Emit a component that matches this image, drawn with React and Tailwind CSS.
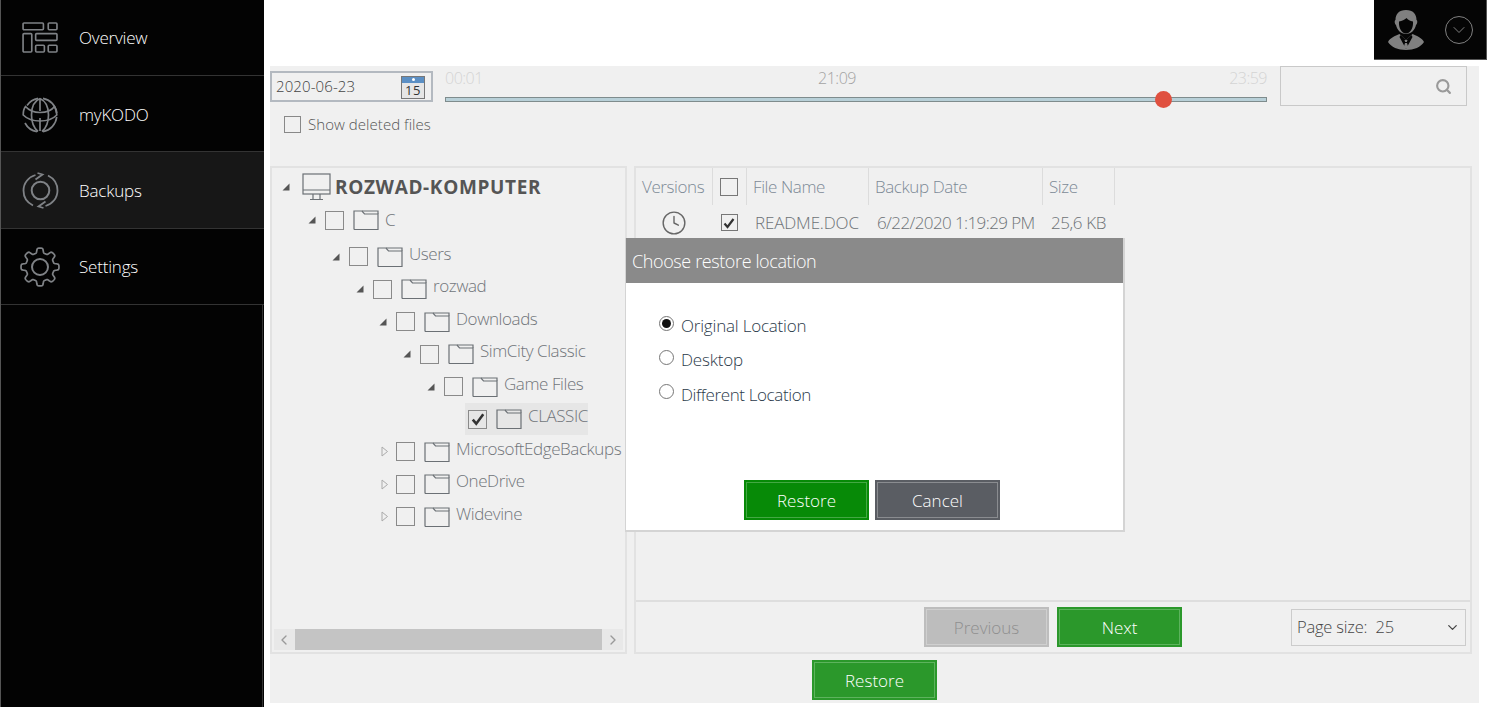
import React from "react";
import { ChevronDown, ChevronLeft, ChevronRight, Clock, Search } from "lucide-react";

const iconGrey = "#7f8286";

const OverviewIcon = () => (
  <svg width="37" height="31" viewBox="0 0 38 32" fill="none" stroke={iconGrey} strokeWidth="1.700">
    <rect x="1" y="1" width="21" height="7" rx="1" />
    <rect x="27" y="1" width="9" height="7" rx="1" />
    <rect x="1" y="12" width="9" height="19" rx="1" />
    <rect x="14" y="12" width="22" height="7" rx="1" />
    <rect x="14" y="24" width="9" height="7" rx="1" />
    <rect x="27" y="24" width="9" height="7" rx="1" />
  </svg>
);

const GlobeIcon = () => (
  <svg width="36" height="36" viewBox="0 0 36 36" fill="none" stroke={iconGrey} strokeWidth="1.700">
    <path d="M5 8.500A16.800 16.800 0 0 1 16 1.300M21 1.400A16.800 16.800 0 0 1 34.700 16M34.700 20A16.800 16.800 0 0 1 21 34.700M15 34.700A16.800 16.800 0 0 1 3 26" />
    <path d="M18 1.500C12 4 9.500 10 9.500 18c0 7 2.500 13 6.500 16.500M18 1.500c5.500 2.500 8.500 9 8.500 16.500 0 7-2.500 13-6.500 16.500M18 2v12M18 21v13" />
    <path d="M3.500 9.500C1.500 12 1.200 15 1.200 18c4 4 10 6 16.800 6s13-2 16.800-6c0-3-.5-6-2.300-8.500-3 4-8.500 6-14.500 6S7 13.500 3.500 9.500z" />
  </svg>
);

const BackupIcon = () => (
  <svg width="37" height="37" viewBox="0 0 37 37" fill="none" stroke={iconGrey} strokeWidth="1.800">
    <circle cx="18.500" cy="18.500" r="8.800" strokeWidth="2" />
    <path d="M11 33.500C5 30.500 1.500 25 1.500 18.500 1.500 11 6.500 5 13.500 3M26 3.500C32 6.500 35.500 12 35.500 18.500 35.500 26 30.500 32 23.500 34" />
    <path d="M13.500 7.500 20.500 2.500 15.500 1M23.500 29.500 16.500 34.500 21.500 36" />
  </svg>
);

// rounded eight-lobed cog outline
const gearPath = Array.from({ length: 192 }, (_, i) => {
  const a = (i / 192) * Math.PI * 2;
  const r = 16.6 + 2.4 * Math.tanh(2.6 * Math.cos(8 * a));
  return `${i ? "L" : "M"}${(20 + r * Math.cos(a)).toFixed(2)} ${(20 + r * Math.sin(a)).toFixed(2)}`;
}).join("") + "z";

const GearIcon = () => (
  <svg width="40" height="40" viewBox="0 0 40 40" fill="none" stroke={iconGrey} strokeWidth="1.700" strokeLinejoin="round">
    <circle cx="20" cy="20" r="8" strokeWidth="2" />
    <path d={gearPath} />
  </svg>
);

const UserIcon = () => (
  <svg width="36" height="40" viewBox="0 0 36 40" className="shrink-0">
    <path d="M18 0C11 0 7.500 4 7.500 10c-1.200.5-1 4 .5 5 1 5 5 9 10 9s9-4 10-9c1.500-1 1.700-4.500.5-5C28.500 4 25 0 18 0z" fill="#808080" />
    <path d="M11 11.500c3-.5 5.500-1.500 7.500-3.500 1.500 2 3.500 3 6.500 3.500.5 6-2.500 12-7 12s-7.500-6-7-12z" fill="#050505" />
    <path d="M0 32c2-4 7-6 11.500-8L18 30l6.500-6c4.500 2 9.500 4 11.500 8-3 5-10 8-18 8S3 37 0 32z" fill="#808080" />
    <path d="M12.500 25 18 30l5.500-5 1 2L18 39l-6.500-12z" fill="#050505" />
    <path d="M16.500 30h3l-.7 2h-1.600zM17 33h2l1.200 4-2.200 2-2.200-2z" fill="#808080" />
  </svg>
);

const FolderIcon = () => (
  <svg width="26" height="20" viewBox="0 0 26 20" fill="none" stroke="#6b7075" strokeWidth="1.200" className="shrink-0">
    <path d="M1 19V1h8l2.500 3H25v15.500H1.500z" />
    <path d="M9 1h16v3" />
  </svg>
);

const MonitorIcon = () => (
  <svg width="29" height="28" viewBox="0 0 29 28" fill="none" stroke="#6b7075" strokeWidth="1.200" className="shrink-0">
    <rect x="1" y="1" width="27" height="20" />
    <path d="M1 17h27M11 21v5M18 21v5M8 26.500h13" />
  </svg>
);

const Check = ({ size = 12 }) => (
  <svg width={size} height={size} viewBox="0 0 12 12" fill="none" stroke="#333" strokeWidth="2.200">
    <path d="M1.500 6.500 4.500 10 10.500 2" />
  </svg>
);

const Box = ({ checked }) => (
  <span className="flex items-center justify-center shrink-0 w-[19px] h-[19px] border border-[#8a8a8a]">
    {checked && <Check size={14} />}
  </span>
);

const sideItems = [
  { label: "Overview", icon: <OverviewIcon />, h: "h-[76px]" },
  { label: "myKODO", icon: <GlobeIcon />, h: "h-[76px] pt-[2px]" },
  { label: "Backups", icon: <BackupIcon />, h: "h-[77px] pt-[1px]", active: true },
  { label: "Settings", icon: <GearIcon />, h: "h-[76px]" },
];

const treeRows = [
  { label: "C", pad: "pl-[35px] mb-[3.75px]", open: true, textY: "-translate-y-[1px]" },
  { label: "Users", pad: "pl-[59px]", open: true },
  { label: "rozwad", pad: "pl-[83px]", open: true },
  { label: "Downloads", pad: "pl-[106px]", open: true },
  { label: "SimCity Classic", pad: "pl-[130px]", open: true },
  { label: "Game Files", pad: "pl-[154px]", open: true },
  { label: "CLASSIC", pad: "pl-[193px]", checked: true, leaf: true },
  { label: "MicrosoftEdgeBackups", pad: "pl-[106px]" },
  { label: "OneDrive", pad: "pl-[106px]" },
  { label: "Widevine", pad: "pl-[106px]" },
];

const Toggle = ({ open }) =>
  open ? (
    <svg width="8" height="8" viewBox="0 0 8 8" className="shrink-0">
      <path d="M7.500 .5v7H.5z" fill="#555" />
    </svg>
  ) : (
    <svg width="8" height="11" viewBox="0 0 8 11" className="shrink-0 translate-x-[2px]" fill="none" stroke="#aaa">
      <path d="M1 1l5.500 4.500L1 10z" />
    </svg>
  );

const TreeRow = ({ row }) => (
  <div className={`flex items-center h-[32.5px] ${row.pad}`}>
    {!row.leaf && (
      <span className="w-[10px] flex justify-center shrink-0">
        <Toggle open={row.open} />
      </span>
    )}
    <div className={`flex items-center h-[32px] ${row.leaf ? "bg-[#e6e6e6] pl-[3px]" : "pl-[8px]"}`}>
      <Box checked={row.checked} />
      <span className="ml-[9px]">
        <FolderIcon />
      </span>
      <span
        className={`ml-[6px] ${row.textY || "-translate-y-[3px]"} text-[17px] font-light text-[#70757a] tracking-[-0.42px] whitespace-nowrap`}
      >
        {row.label}
      </span>
    </div>
  </div>
);

const Btn = ({ children, className }) => (
  <button className={`w-[125px] h-[40px] border-2 text-[17px] font-light ${className}`}>
    <span className="block translate-y-[1px]">{children}</span>
  </button>
);

const Radio = ({ label, checked, h, track }) => (
  <label className={`flex items-center gap-[7px] ${h}`}>
    <span className="flex items-center justify-center w-[15px] h-[15px] rounded-full border border-[#767676] bg-white -translate-y-[3px]">
      {checked && <span className="w-[9px] h-[9px] rounded-full bg-[#111]" />}
    </span>
    <span className={`text-[17px] font-light text-[#2b3a4a] ${track}`}>{label}</span>
  </label>
);

const headCell =
  "flex items-center h-full pt-[1px] border-r border-[#dcdcdc] text-[17px] font-light text-[#7d8a96] tracking-[-0.4px] whitespace-nowrap";
const rowCell = "flex items-center pt-[1px] text-[17px] font-light text-[#6d7276] whitespace-nowrap";

export default function App() {
  return (
    <div
      className="relative flex w-full h-[707px] overflow-hidden bg-white"
      style={{ fontFamily: '"Open Sans", "Noto Sans", sans-serif' }}
    >
      <aside className="w-[264px] shrink-0 h-full bg-[#030303] border-l border-[#555] flex flex-col">
        {sideItems.map((item) => (
          <div
            key={item.label}
            className={`flex items-center border-b border-[#333] ${item.h} ${item.active ? "bg-[#171717]" : ""}`}
          >
            <span className="w-[78px] flex justify-center shrink-0">{item.icon}</span>
            <span className="text-[17px] font-light text-white tracking-[-0.2px]">{item.label}</span>
          </div>
        ))}
        <div className="flex-1 mr-[1px] border-r border-[#333]" />
      </aside>

      <main className="flex-1 min-w-0 flex flex-col">
        <header className="h-[66px] shrink-0 flex justify-end items-start pr-[2px]">
          <div className="w-[113px] h-[60px] bg-[#050505] border-b border-r border-[#555] flex items-center pl-[14px] gap-[21px]">
            <UserIcon />
            <span className="w-[28px] h-[28px] rounded-full border border-[#808080] flex items-center justify-center shrink-0">
              <ChevronDown size={20} color="#808080" strokeWidth={1.2} />
            </span>
          </div>
        </header>

        <section className="ml-[6px] w-[1209px] h-[637px] bg-[#f0f0f0] flex flex-col">
          <div className="h-[100px] shrink-0 flex">
            <div className="w-[175px] shrink-0 pt-[5px]">
              <div className="w-[163px] h-[31px] border-2 border-[#b3b9c0] flex items-center justify-between pl-[4px] pr-[6px]">
                <span className="text-[15px] font-light text-[#444] tracking-[0.1px]">2020-06-23</span>
                <span className="w-[24px] h-[23px] border border-[#777] bg-[#e6e6e6] flex flex-col translate-y-[1px]">
                  <span className="h-[6px] bg-[#5b8fc4] flex justify-center pt-[1px]">
                    <span className="w-[3px] h-[3px] rounded-full bg-white" />
                  </span>
                  <span className="flex-1 flex items-center justify-center text-[13px] leading-none font-normal text-[#333] tracking-[0.5px]">
                    15
                  </span>
                </span>
              </div>
              <label className="flex items-center gap-[7px] pl-[14px] mt-[11px]">
                <span className="w-[17px] h-[17px] border border-[#888]" />
                <span className="text-[15px] font-light text-[#555] tracking-[0.05px]">Show deleted files</span>
              </label>
            </div>

            <div className="w-[822px] shrink-0">
              <div className="flex justify-between text-[16px] font-light tracking-[-0.5px] h-[24px] mb-[7px] items-center">
                <span className="text-[#d4d4d4]">00:01</span>
                <span className="text-[#a3a3a3] mr-[38px]">21:09</span>
                <span className="text-[#d4d4d4]">23:59</span>
              </div>
              <div className="relative h-[5px] bg-[#b8d0d8] border border-[#7f8c8d]">
                <span className="absolute left-[709px] top-[-7px] w-[17px] h-[17px] rounded-full bg-[#e0503f]" />
              </div>
            </div>

            <div className="ml-[13px] w-[187px] h-[40px] border border-[#c9c9c9] flex items-center justify-end pr-[14px]">
              <Search size={17} color="#9a9a9a" strokeWidth={3} />
            </div>
          </div>

          <div className="flex gap-[7px] h-[488px] shrink-0">
            <div className="w-[357px] h-full border-2 border-[#e2e2e2] flex flex-col">
              <div className="flex-1 pt-[2px] overflow-hidden">
                <div className="flex items-center h-[34px] pl-[10px]">
                  <Toggle open />
                  <span className="ml-[12px]">
                    <MonitorIcon />
                  </span>
                  <span className="ml-[4px] text-[19px] font-bold text-[#555] tracking-[0.65px]">ROZWAD-KOMPUTER</span>
                </div>
                {treeRows.map((row) => (
                  <TreeRow key={row.label} row={row} />
                ))}
              </div>
              <div className="mx-[2px] mb-[2px] h-[21px] bg-[#e8e8e8] flex items-center justify-between">
                <ChevronLeft size={16} color="#999" className="ml-[2px]" />
                <div className="w-[307px] h-full bg-[#c4c4c4]" />
                <ChevronRight size={16} color="#999" className="mr-[2px]" />
              </div>
            </div>

            <div className="w-[838px] h-full border-2 border-[#e2e2e2] flex flex-col">
              <div className="flex-1 border-b-2 border-[#dedede]">
                <div className="flex h-[37px]">
                  <div className={`${headCell} w-[77px] pl-[6px]`}>Versions</div>
                  <div className={`${headCell} w-[34px] justify-center pr-[2px]`}>
                    <span className="w-[18px] h-[18px] border border-[#777]" />
                  </div>
                  <div className={`${headCell} w-[122px] pl-[6px]`}>File Name</div>
                  <div className={`${headCell} w-[174px] pl-[6px]`}>Backup Date</div>
                  <div className={`${headCell} w-[72px] pl-[6px]`}>Size</div>
                </div>
                <div className="flex h-[34px]">
                  <div className={`${rowCell} w-[77px] justify-center pr-[2px]`}>
                    <Clock size={26} color="#666" strokeWidth={1.300} />
                  </div>
                  <div className={`${rowCell} w-[34px] justify-center pr-[2px]`}>
                    <span className="w-[17px] h-[17px] border border-[#777] flex items-center justify-center">
                      <Check />
                    </span>
                  </div>
                  <div className={`${rowCell} w-[122px] pl-[8px] tracking-[-0.15px]`}>README.DOC</div>
                  <div className={`${rowCell} w-[174px] pl-[8px] tracking-[-0.6px]`}>6/22/2020 1:19:29 PM</div>
                  <div className={`${rowCell} w-[72px] pl-[8px] tracking-[-0.4px]`}>25,6 KB</div>
                </div>
              </div>
              <div className="h-[50px] shrink-0 flex items-center pl-[288px] pr-[4px] gap-[8px]">
                <Btn className="bg-[#bdbdbd] border-[#bdbdbd] text-[#8f8f8f] shadow-[inset_0_0_0_1px_#cfcfcf]">Previous</Btn>
                <Btn className="bg-[#2b982b] border-[#2b982b] text-white shadow-[inset_0_0_0_1px_#5db35d]">Next</Btn>
                <div className="ml-auto w-[175px] h-[37px] border border-[#cccccc] flex items-center justify-between pl-[5px] pr-[5px] text-[16.500px] font-light text-[#444] tracking-[-0.2px]">
                  <span>Page size:&nbsp; 25</span>
                  <ChevronDown size={15} color="#444" strokeWidth={2} />
                </div>
              </div>
            </div>
          </div>

          <div className="flex-1 flex justify-center pt-[6px]">
            <Btn className="bg-[#2b982b] border-[#2b982b] text-white shadow-[inset_0_0_0_1px_#5db35d]">Restore</Btn>
          </div>
        </section>
      </main>

      <div className="absolute left-[625px] top-[238px] w-[500px] h-[294px] bg-white border-r-2 border-b-2 border-l border-[#d4d4d4] flex flex-col">
        <div className="h-[45px] shrink-0 bg-[#8a8a8a] flex items-center pl-[6px] pt-[2px] text-[18px] font-light text-white tracking-[-0.39px]">
          Choose restore location
        </div>
        <div className="pl-[33px] pt-[26px] flex-1">
          <Radio label="Original Location" checked h="h-[34px]" track="tracking-[-0.2px]" />
          <Radio label="Desktop" h="h-[34px]" track="tracking-[-0.2px]" />
          <Radio label="Different Location" h="h-[35px]" track="tracking-[-0.38px]" />
        </div>
        <div className="flex gap-[6px] pl-[118px] pb-[10px]">
          <Btn className="bg-[#078a07] border-[#078a07] text-white shadow-[inset_0_0_0_1px_#43a843]">Restore</Btn>
          <Btn className="bg-[#5a5d63] border-[#5a5d63] text-white shadow-[inset_0_0_0_1px_#8a8c90]">Cancel</Btn>
        </div>
      </div>
    </div>
  );
}
